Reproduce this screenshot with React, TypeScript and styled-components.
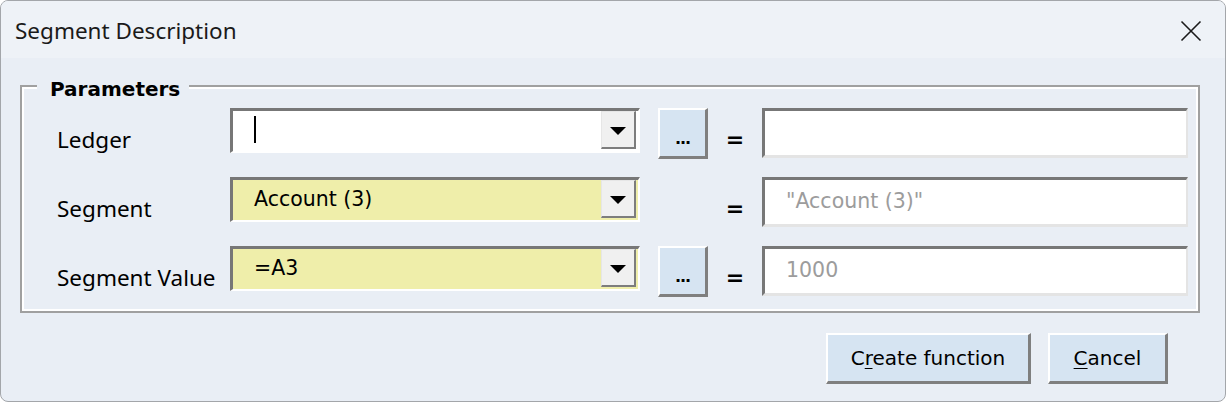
import styled, { createGlobalStyle } from 'styled-components';

const GlobalStyle = createGlobalStyle`
  html, body {
    margin: 0;
    padding: 0;
    background: #ffffff;
  }
  * {
    box-sizing: border-box;
  }
`;

const Window = styled.div`
  width: 1226px;
  height: 402px;
  border: 1px solid #a3a6aa;
  border-radius: 8px;
  background: #e9eef5;
  overflow: hidden;
  display: flex;
  flex-direction: column;
`;

const TitleBar = styled.div`
  height: 57px;
  flex: 0 0 57px;
  background: #eef2f7;
  display: flex;
  align-items: center;
  justify-content: space-between;
  padding: 2px 23px 0 14px;
  font-family: 'Noto Sans', 'Open Sans', sans-serif;
  font-size: 22.5px;
  color: #1a1a1a;
`;

const CloseButton = styled.button`
  width: 22px;
  height: 22px;
  padding: 0;
  border: none;
  background: transparent;
  display: flex;
  align-items: center;
  justify-content: center;
`;

const Body = styled.div`
  flex: 1;
  padding: 27px 25px 0 19px;
  display: flex;
  flex-direction: column;
`;

const Group = styled.div`
  position: relative;
  height: 228px;
  border: 2px solid #a0a0a0;
  box-shadow: inset 0 0 0 2px #ffffff;
  padding: 21px 0 0 35px;
  display: flex;
  flex-direction: column;
  gap: 18px;
`;

const Legend = styled.span`
  position: absolute;
  top: -10px;
  left: 15px;
  padding: 0 9px 0 13px;
  background: #e9eef5;
  font-family: 'DejaVu Sans', Verdana, sans-serif;
  font-weight: bold;
  font-size: 20px;
  line-height: 24px;
  color: #000;
`;

const Row = styled.div`
  display: grid;
  grid-template-columns: 173px 428px 50px 54px 426px;
  align-items: start;
  height: 51px;
`;

const Label = styled.span`
  font-family: 'Noto Sans', 'Open Sans', sans-serif;
  font-size: 22.5px;
  line-height: 50px;
  padding-top: 7px;
  color: #000;
  white-space: nowrap;
`;

const Combo = styled.div<{ $filled?: boolean }>`
  width: 410px;
  height: 45px;
  display: flex;
  align-items: stretch;
  border-style: solid;
  border-width: 3px 2px 2px 3px;
  border-color: #777 #fff #fff #777;
  background: ${({ $filled }) => ($filled ? '#efeeaa' : '#ffffff')};
  padding: 0 2px 2px 0;
`;

const ComboText = styled.div`
  flex: 1;
  display: flex;
  align-items: center;
  padding-left: 21px;
  font-family: 'DejaVu Sans', Verdana, sans-serif;
  font-size: 20.5px;
  color: #000;
`;

const Caret = styled.span`
  width: 2px;
  height: 27px;
  margin-top: -2px;
  background: #000;
`;

const DropButton = styled.div`
  width: 35px;
  background: #f0f0f0;
  border-style: solid;
  border-width: 1px 2px 2px 1px;
  border-color: #e6e6e6 #7d7d7d #7d7d7d #e6e6e6;
  display: flex;
  align-items: center;
  justify-content: center;
`;

const Arrow = styled.span`
  width: 0;
  height: 0;
  border-left: 8px solid transparent;
  border-right: 8px solid transparent;
  border-top: 8px solid #000;
  margin-top: 2px;
`;

const DotsButton = styled.button`
  width: 50px;
  height: 51px;
  padding: 10px 0 0;
  background: #d6e4f2;
  border-style: solid;
  border-width: 2px 3px 3px 2px;
  border-color: #fff #7f7f7f #7f7f7f #fff;
  font-family: 'DejaVu Sans', Verdana, sans-serif;
  font-weight: bold;
  font-size: 16px;
  letter-spacing: -1px;
  color: #000;
`;

const Equals = styled.span`
  font-family: 'DejaVu Sans', Verdana, sans-serif;
  font-weight: bold;
  font-size: 22px;
  line-height: 50px;
  padding-top: 7px;
  text-align: center;
  color: #000;
`;

const Field = styled.div`
  height: 50px;
  display: flex;
  align-items: center;
  padding: 0 0 3px 21px;
  background: #ffffff;
  border-style: solid;
  border-width: 3px 2px 3px 3px;
  border-color: #777 #e4e4e4 #e4e4e4 #777;
  font-family: 'DejaVu Sans', Verdana, sans-serif;
  font-size: 20.5px;
  color: #9c9c9c;
`;

const Footer = styled.div`
  display: flex;
  justify-content: flex-end;
  gap: 17px;
  padding: 20px 32px 0 0;
`;

const ActionButton = styled.button<{ $width: number }>`
  width: ${({ $width }) => $width}px;
  height: 51px;
  background: #d6e4f2;
  border-style: solid;
  border-width: 2px 3px 3px 2px;
  border-color: #fff #7f7f7f #7f7f7f #fff;
  font-family: 'DejaVu Sans', Verdana, sans-serif;
  font-size: 20px;
  color: #000;
  padding: 0;
  u {
    text-decoration-thickness: 1px;
    text-underline-offset: 3px;
  }
`;

const Empty = styled.span``;

const rows = [
  { label: 'Ledger', value: null, filled: false, dots: true, result: '' },
  { label: 'Segment', value: 'Account (3)', filled: true, dots: false, result: '"Account (3)"' },
  { label: 'Segment Value', value: '=A3', filled: true, dots: true, result: '1000' },
];

const App = () => {
  return (
    <>
      <GlobalStyle />
      <Window>
        <TitleBar>
          <span>Segment Description</span>
          <CloseButton aria-label="Close">
            <svg width="22" height="22" viewBox="0 0 22 22">
              <path d="M1.5 1.5 L20.5 20.5 M20.5 1.5 L1.5 20.5" stroke="#1a1a1a" strokeWidth="1.6" />
            </svg>
          </CloseButton>
        </TitleBar>
        <Body>
          <Group>
            <Legend>Parameters</Legend>
            {rows.map((row) => (
              <Row key={row.label}>
                <Label>{row.label}</Label>
                <Combo $filled={row.filled}>
                  <ComboText>{row.value === null ? <Caret /> : row.value}</ComboText>
                  <DropButton>
                    <Arrow />
                  </DropButton>
                </Combo>
                {row.dots ? <DotsButton>...</DotsButton> : <Empty />}
                <Equals>=</Equals>
                <Field>{row.result}</Field>
              </Row>
            ))}
          </Group>
          <Footer>
            <ActionButton $width={205}>
              C<u>r</u>eate function
            </ActionButton>
            <ActionButton $width={120}>
              <u>C</u>ancel
            </ActionButton>
          </Footer>
        </Body>
      </Window>
    </>
  );
};

export default App;
